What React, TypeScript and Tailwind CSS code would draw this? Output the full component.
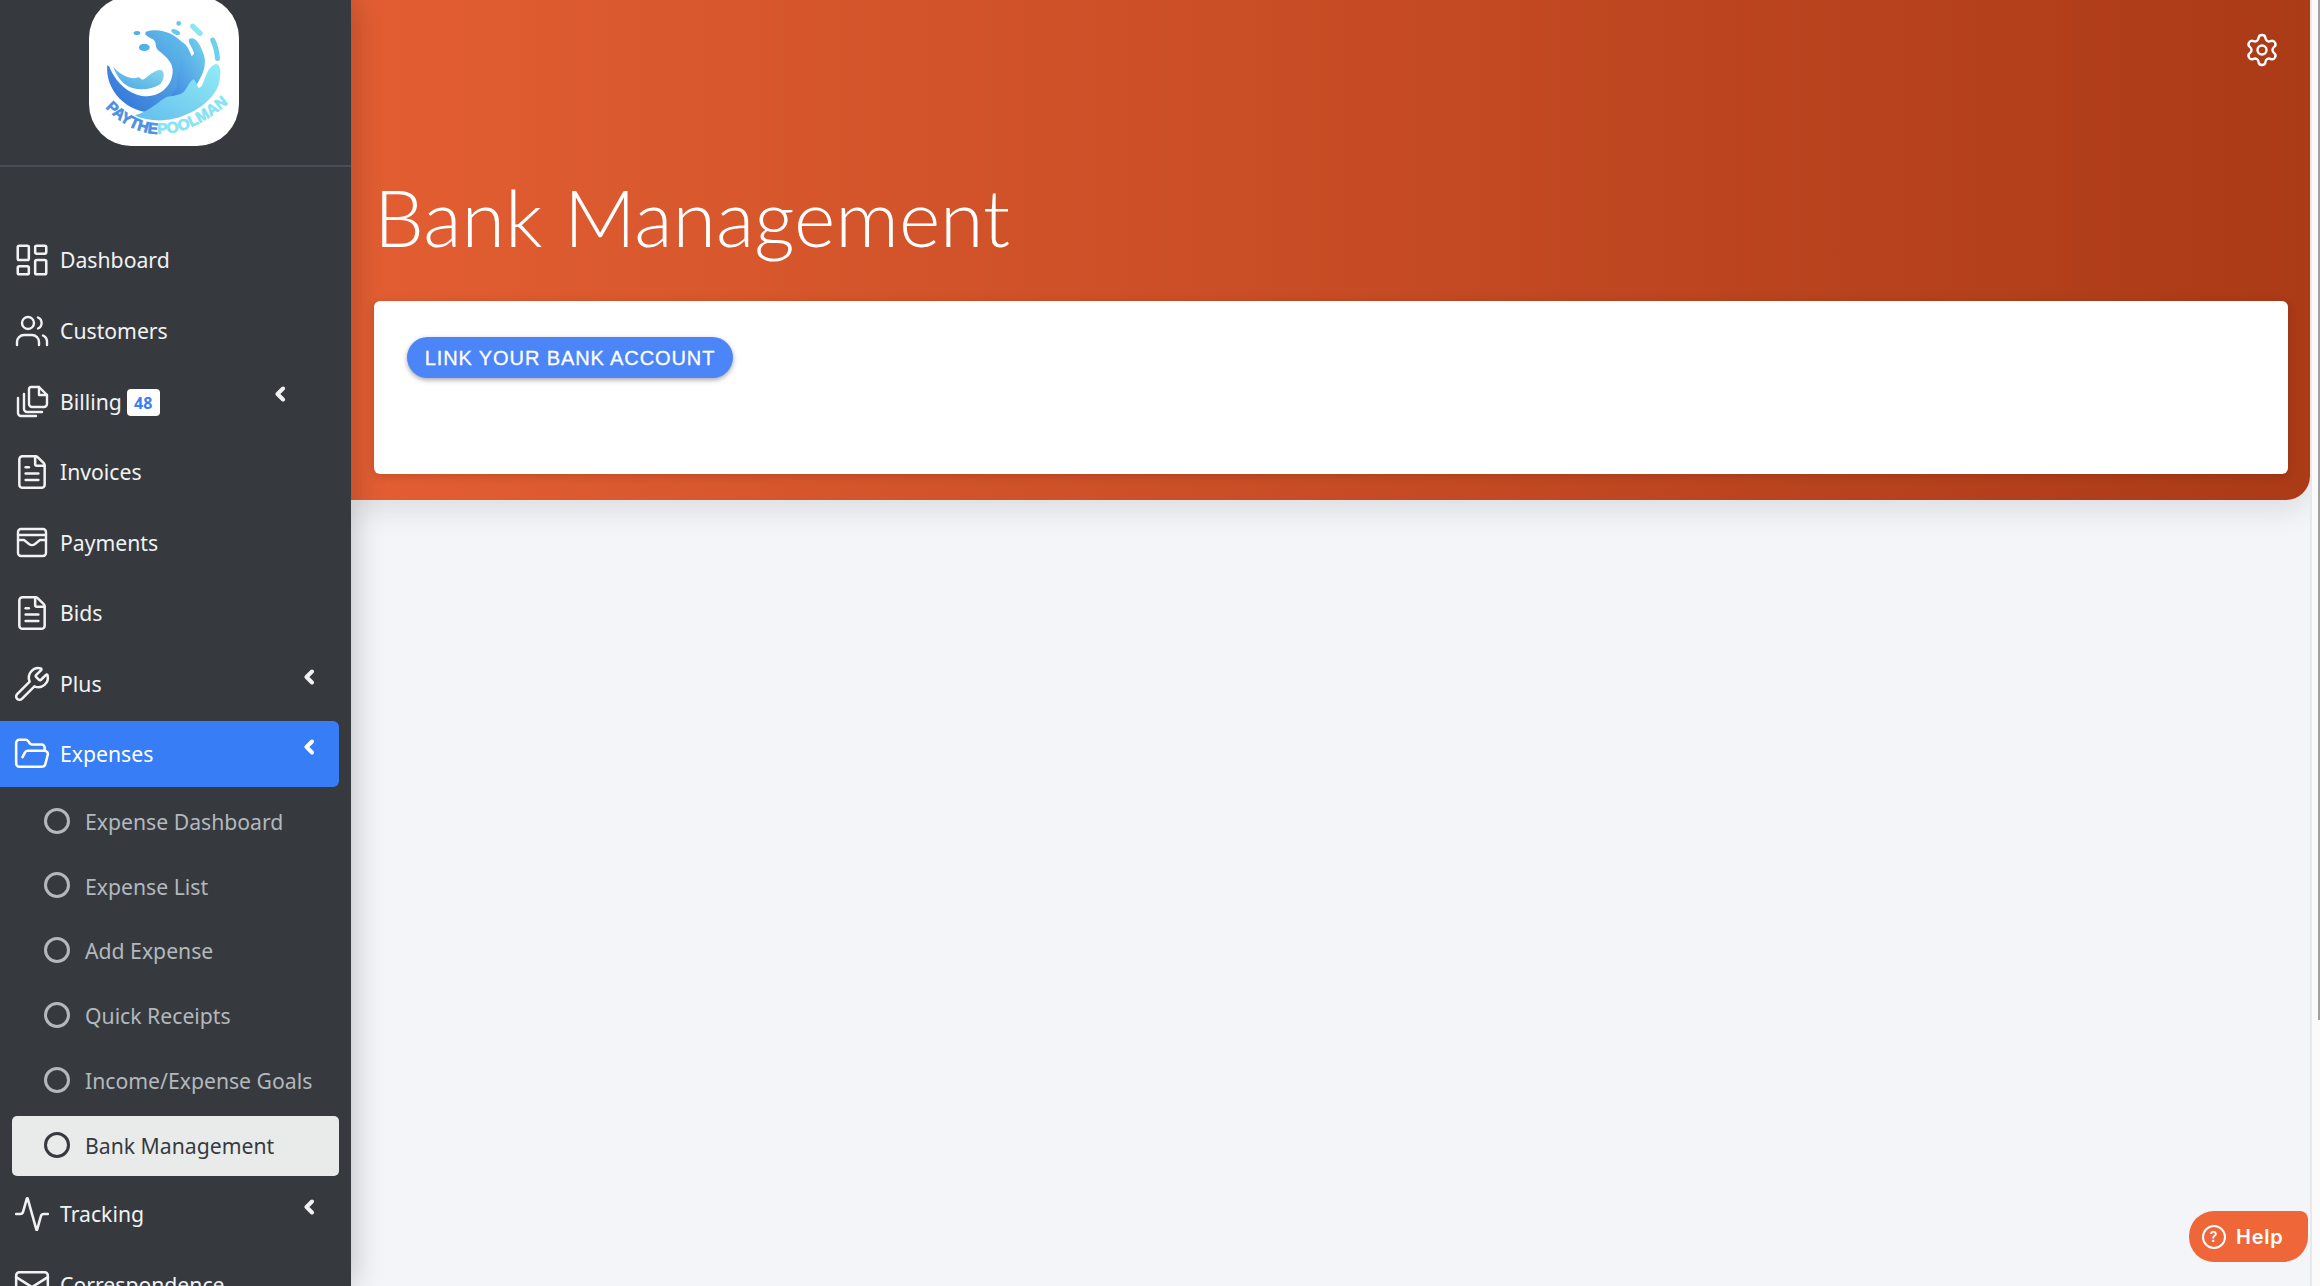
import { Activity, FileText, FolderOpen, LayoutDashboard, Mail, Settings, Wrench } from 'lucide-react'
import type { ReactNode } from 'react'

function UsersIcon() {
  return (
    <svg width="34" height="34" viewBox="0 0 34 34" fill="none" stroke="currentColor" strokeWidth="2.4" strokeLinecap="round">
      <circle cx="13" cy="9" r="6" />
      <path d="M2 31v-3a7 7 0 0 1 7-7h8a7 7 0 0 1 7 7v3" />
      <path d="M23 3.5a6 6 0 0 1 0 11" />
      <path d="M28 21.5a7 7 0 0 1 4 6.5v3" />
    </svg>
  )
}

function BillingIcon() {
  return (
    <svg width="34" height="34" viewBox="0 0 34 34" fill="none" stroke="currentColor" strokeWidth="2.4" strokeLinecap="round" strokeLinejoin="round">
      <path d="M14 5a2 2 0 0 1 2-2h8l8 8v9a3 3 0 0 1-3 3H17a3 3 0 0 1-3-3z" />
      <path d="M24 3v8h8" />
      <path d="M3 14v15a3 3 0 0 0 3 3h15" />
      <path d="M9 10v15a3 3 0 0 0 3 3h15" />
    </svg>
  )
}

function PaymentsIcon() {
  return (
    <svg width="34" height="34" viewBox="0 0 34 34" fill="none" stroke="currentColor" strokeWidth="2.4" strokeLinecap="round" strokeLinejoin="round">
      <rect x="3" y="3" width="28" height="27" rx="3" />
      <path d="M3 9h28" />
      <path d="M3 14h6l5 4a5 5 0 0 0 6 0l5-4h6" />
    </svg>
  )
}

function Chevron({ className = '' }: { className?: string }) {
  return (
    <svg className={className} width="12" height="16" viewBox="0 0 12 16" fill="none" stroke="currentColor" strokeWidth="4" strokeLinecap="round" strokeLinejoin="round">
      <path d="M9 2.5 3.5 8 9 13.5" />
    </svg>
  )
}

function Logo() {
  return (
    <svg width="150" height="150" viewBox="88 -12 448 449">
      <defs>
        <linearGradient id="deep" x1="0" y1="1" x2="1" y2="0">
          <stop offset="0" stopColor="#2f6ed8" />
          <stop offset="1" stopColor="#66c4ec" />
        </linearGradient>
        <linearGradient id="mid" x1="0" y1="1" x2="1" y2="0">
          <stop offset="0" stopColor="#3f86e0" />
          <stop offset="1" stopColor="#74d4ee" />
        </linearGradient>
        <linearGradient id="light" x1="0" y1="1" x2="1" y2="0">
          <stop offset="0" stopColor="#62bdec" />
          <stop offset="1" stopColor="#93ecf6" />
        </linearGradient>
        <linearGradient id="inner" x1="0" y1="1" x2="1" y2="0">
          <stop offset="0" stopColor="#4ba4e6" />
          <stop offset="1" stopColor="#8adcec" />
        </linearGradient>
        <path id="logoArc" d="M136 322Q290 482 494 318" fill="none" />
      </defs>
      <path d="M142 195C136 270 200 340 290 338C345 332 385 300 400 260L395 170C385 140 375 130 365 125C340 100 300 82 258 95C250 105 268 112 280 118C292 128 282 138 296 152C320 170 340 190 338 215C336 255 305 287 262 288C210 288 165 245 148 198Z" fill="url(#deep)" />
      <path d="M350 262C352 220 360 180 370 165C385 170 395 172 402 160C400 145 380 125 388 116C405 108 420 130 430 160C440 185 432 215 420 235C400 280 350 300 330 290Z" fill="url(#mid)" />
      <path d="M225 345C265 335 300 300 320 290C345 285 365 285 375 270C385 255 395 235 402 238C410 245 412 268 420 262C435 250 435 205 465 192C485 190 482 225 478 245C465 300 400 345 330 358C290 364 250 358 225 345Z" fill="url(#light)" />
      <path d="M160 198C175 222 215 240 232 232C240 228 242 240 250 238C265 230 285 205 305 210C315 215 312 240 300 252C270 272 220 272 195 252C178 238 166 218 160 198Z" fill="url(#inner)" />
      <ellipse cx="231" cy="99" rx="10" ry="6" fill="#4fb1ea" />
      <ellipse cx="253" cy="142" rx="16" ry="11" fill="#4fb1ea" />
      <ellipse cx="347" cy="96" rx="14" ry="7" transform="rotate(25 347 96)" fill="#66c8ee" />
      <circle cx="356" cy="70" r="7" fill="#66c8ee" />
      <path d="M398 79 420 100" stroke="#8be6f4" strokeWidth="16" strokeLinecap="round" />
      <path d="M458 120Q470 145 472 175" stroke="#6fd0ee" strokeWidth="15" strokeLinecap="round" fill="none" />
      <text fontFamily="'Liberation Sans',sans-serif" fontWeight="700" fontSize="46" strokeWidth="2">
        <textPath href="#logoArc" textLength="416" lengthAdjust="spacing">
          <tspan fill="#4b90e4" stroke="#4b90e4">PAYTHE</tspan>
          <tspan fill="#86e3f4" stroke="#86e3f4">POOLMAN</tspan>
        </textPath>
      </text>
    </svg>
  )
}

function NavRow({ icon, label, badge, chevron }: { icon: ReactNode; label: string; badge?: string; chevron?: 'near' | 'far' }) {
  return (
    <div className="relative flex h-[70.6px] items-center pl-[12px] text-[#f1f2f3]">
      <span className="flex w-[48px] shrink-0 items-center pr-[8px] [&>svg]:mx-auto">{icon}</span>
      <span className="text-[21.2px]">{label}</span>
      {badge && (
        <span className="ml-[5px] mt-[3px] flex h-[27px] w-[33px] items-center justify-center rounded-[4px] bg-white text-[16px] font-bold text-[#3a7df5]">{badge}</span>
      )}
      {chevron === 'near' && <Chevron className="absolute left-[274px] top-[20px]" />}
      {chevron === 'far' && <Chevron className="absolute left-[303px] top-[20px]" />}
    </div>
  )
}

function SubRow({ label, active }: { label: string; active?: boolean }) {
  return (
    <div className={active ? 'mx-[12px] mb-[3px] mt-[2px] flex h-[60px] items-center rounded-[5px] bg-[#e9ebeb] pl-[32px] text-[#363a3e]' : 'flex h-[64.9px] items-center pl-[44px] text-[#b3b8bd]'}>
      <span className="mb-[2px] h-[26px] w-[26px] shrink-0 rounded-full border-[3px] border-current" />
      <span className="ml-[15px] text-[21.2px]">{label}</span>
    </div>
  )
}

export default function App() {
  return (
    <div className='flex h-[1286px] w-[2320px] overflow-hidden bg-[#f4f5f9] font-["Noto_Sans",sans-serif]'>
      <aside className="z-10 h-full w-[351px] shrink-0 overflow-hidden bg-[#363a3e] shadow-[0_0_30px_rgba(0,0,0,0.25)]">
        <div className="h-[167px] border-b-2 border-[#4a4d57]">
          <div className="ml-[89px] h-[150px] w-[150px] -translate-y-[4px] overflow-hidden rounded-[42px] bg-white">
            <Logo />
          </div>
        </div>
        <nav className="pt-[58px]">
          <NavRow icon={<LayoutDashboard size={38} strokeWidth={1.6} />} label="Dashboard" />
          <NavRow icon={<UsersIcon />} label="Customers" />
          <NavRow icon={<BillingIcon />} label="Billing" badge="48" chevron="near" />
          <NavRow icon={<FileText size={38} strokeWidth={1.6} />} label="Invoices" />
          <NavRow icon={<PaymentsIcon />} label="Payments" />
          <NavRow icon={<FileText size={38} strokeWidth={1.6} />} label="Bids" />
          <NavRow icon={<Wrench size={38} strokeWidth={1.6} />} label="Plus" chevron="far" />
          <div className="relative my-[2px] mr-[12px] flex h-[66px] items-center rounded-r-[6px] bg-[#377df6] pl-[12px] text-white">
            <span className="flex w-[48px] shrink-0 items-center justify-center pr-[8px]"><FolderOpen size={38} strokeWidth={1.6} /></span>
            <span className="text-[21.2px]">Expenses</span>
            <Chevron className="absolute left-[303px] top-[18px]" />
          </div>
          <SubRow label="Expense Dashboard" />
          <SubRow label="Expense List" />
          <SubRow label="Add Expense" />
          <SubRow label="Quick Receipts" />
          <SubRow label="Income/Expense Goals" />
          <SubRow label="Bank Management" active />
          <NavRow icon={<Activity size={38} strokeWidth={1.6} />} label="Tracking" chevron="far" />
          <NavRow icon={<Mail size={38} strokeWidth={1.6} />} label="Correspondence" />
        </nav>
      </aside>

      <main className="relative min-w-0 flex-1">
        <div className="mr-[10px] h-[500px] rounded-br-[24px] bg-[linear-gradient(90deg,#e35e32,#ab3a17)] pl-[23px] pr-[22px] shadow-[0_10px_30px_rgba(0,0,0,0.1)]">
          <div className="flex justify-end pr-[8px] pt-[32px] text-white">
            <Settings size={36} strokeWidth={1.6} />
          </div>
          <h1 className="mt-[101px] text-[79px] leading-[96px] font-light text-white font-['Lato',sans-serif]">Bank Management</h1>
          <div className="mt-[36px] h-[173px] rounded-[6px] bg-white px-[33px] pt-[36px] shadow-[0_2px_10px_rgba(0,0,0,0.15)]">
            <button className="flex h-[41px] w-[326px] items-center justify-center rounded-full bg-[#4b85f8] font-['Liberation_Sans',sans-serif] text-[20px] tracking-[0.9px] text-white uppercase shadow-[0_2px_5px_rgba(0,0,0,0.35)] [-webkit-text-stroke:0.3px_white]">
              Link your bank account
            </button>
          </div>
        </div>
        <div className="absolute right-0 top-0 h-full w-[10px] border-l-2 border-[#e8e8e8] bg-[#fafafa]">
          <div className="absolute right-0 top-0 h-[1020px] w-[2px] bg-[#a0a0a0]" />
        </div>
        <div className="absolute bottom-[24px] right-[12px] flex h-[51px] w-[119px] items-center rounded-l-[25px] rounded-tr-[8px] rounded-br-[25px] bg-[#ef6639] pl-[13px] font-['Inter',sans-serif] text-[20px] font-semibold tracking-[0.8px] text-white">
          <span className="mr-[10px] flex h-[24px] w-[24px] items-center justify-center rounded-full border-2 border-white text-[14px]">?</span>
          Help
        </div>
      </main>
    </div>
  )
}
